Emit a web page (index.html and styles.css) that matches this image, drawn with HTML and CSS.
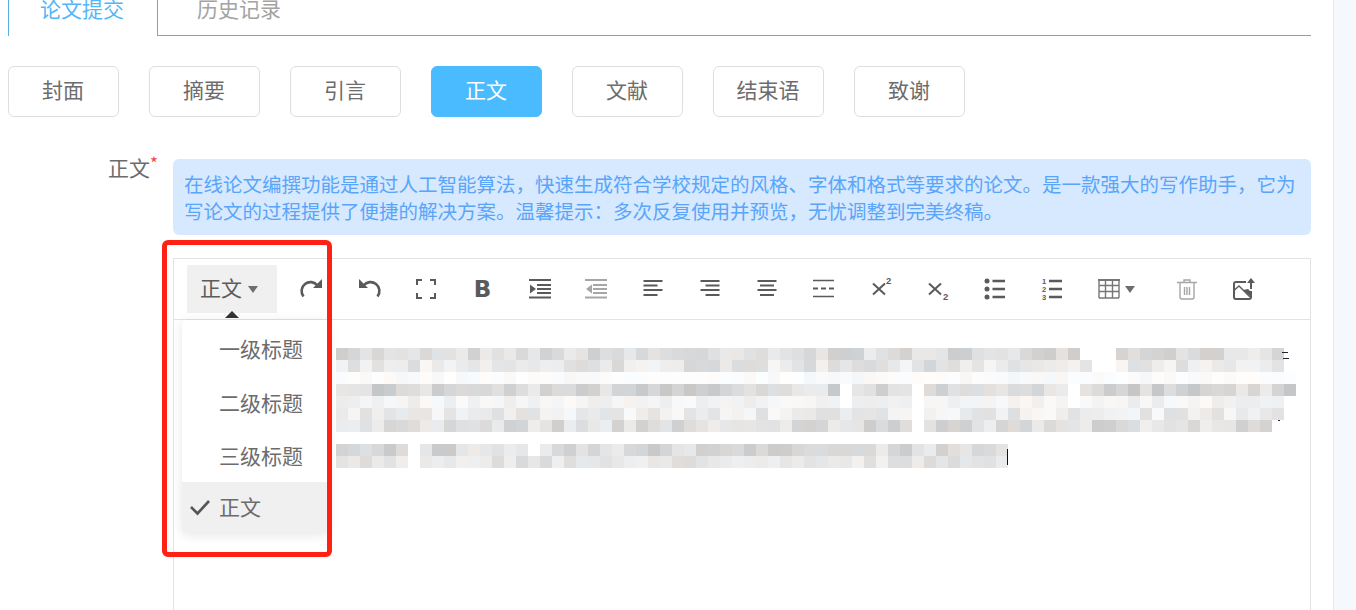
FILE: index.html
```html
<!DOCTYPE html>
<html lang="zh-CN">

<head>
  <meta charset="UTF-8">
  <meta name="viewport" content="width=device-width, initial-scale=1.0">
  <title>论文提交</title>
  <link rel="stylesheet" href="styles.css">
</head>

<body>
  <div class="page">
    <div class="main">
      <div class="tabs">
        <div class="tab active">论文提交</div>
        <div class="tab">历史记录</div>
      </div>

      <div class="sections">
        <button class="section">封面</button>
        <button class="section">摘要</button>
        <button class="section">引言</button>
        <button class="section active">正文</button>
        <button class="section">文献</button>
        <button class="section">结束语</button>
        <button class="section">致谢</button>
      </div>

      <div class="field">
        <label class="field-label">正文<span class="star">*</span></label>
        <div class="field-body">
          <div class="notice">在线论文编撰功能是通过人工智能算法，快速生成符合学校规定的风格、字体和格式等要求的论文。是一款强大的写作助手，它为写论文的过程提供了便捷的解决方案。温馨提示：多次反复使用并预览，无忧调整到完美终稿。</div>

          <div class="editor">
            <div class="toolbar">
              <div class="heading-btn">正文<span class="caret"></span></div>

              <div class="tool">
                <svg width="22" height="22" viewBox="0 0 22 22"><path class="line thick" d="M2.500 18.500A8.500 8.500 0 0 1 16.500 7.500"/><path class="fill" d="M21 1v9h-9z"/></svg>
              </div>
              <div class="tool">
                <svg width="22" height="22" viewBox="0 0 22 22"><path class="line thick" d="M19.500 18.500A8.500 8.500 0 0 0 5.500 7.500"/><path class="fill" d="M1 1v9h9z"/></svg>
              </div>
              <div class="tool">
                <svg width="22" height="22" viewBox="0 0 22 22"><path class="line" d="M2 7V2h5M15 2h5v5M20 15v5h-5M7 20H2v-5"/></svg>
              </div>
              <div class="tool bold">B</div>
              <div class="tool">
                <svg width="22" height="22" viewBox="0 0 22 22"><path class="line" d="M0 2h22M8 7h14M8 11h14M8 15h14M0 19.500h22"/><path class="fill" d="M1 6.500l6 4.500-6 4.500z"/></svg>
              </div>
              <div class="tool muted">
                <svg width="22" height="22" viewBox="0 0 22 22"><path class="line" d="M0 2h22M8 7h14M8 11h14M8 15h14M0 19.500h22"/><path class="fill" d="M7 6.500l-6 4.500 6 4.500z"/></svg>
              </div>
              <div class="tool">
                <svg width="22" height="22" viewBox="0 0 22 22"><path class="line" d="M1.500 3h19M1.500 7.500h14M1.500 12h19M1.500 17h14"/></svg>
              </div>
              <div class="tool">
                <svg width="22" height="22" viewBox="0 0 22 22"><path class="line" d="M1.500 3h19M6.500 7.500h14M1.500 12h19M6.500 17h14"/></svg>
              </div>
              <div class="tool">
                <svg width="22" height="22" viewBox="0 0 22 22"><path class="line" d="M1.500 3h19M4 7.500h14M1.500 12h19M4 17h14"/></svg>
              </div>
              <div class="tool">
                <svg width="22" height="22" viewBox="0 0 22 22"><path class="line thin" d="M0 2.500h21M0 18.500h21"/><path class="line" d="M0 10.500h5M8 10.500h5M16 10.500h5"/></svg>
              </div>
              <div class="tool">
                <svg width="22" height="22" viewBox="0 0 22 22"><path class="line" d="M3 5.500l12 11M15 5.500L3 16.500"/><text class="mini" x="16" y="6">2</text></svg>
              </div>
              <div class="tool">
                <svg width="22" height="22" viewBox="0 0 22 22"><path class="line" d="M2 5.500l12 11M14 5.500L2 16.500"/><text class="mini" x="16" y="21.500">2</text></svg>
              </div>
              <div class="tool">
                <svg width="22" height="22" viewBox="0 0 22 22"><circle class="fill" cx="3" cy="3" r="2.500"/><circle class="fill" cx="3" cy="11" r="2.500"/><circle class="fill" cx="3" cy="19" r="2.500"/><path class="line thick" d="M8.500 3H21M8.500 11H21M8.500 19H21"/></svg>
              </div>
              <div class="tool">
                <svg width="22" height="22" viewBox="0 0 22 22"><text class="mini tiny" x="1" y="6">1</text><text class="mini tiny" x="1" y="14">2</text><text class="mini tiny" x="1" y="22">3</text><path class="line thick" d="M8 3h13M8 11h13M8 19h13"/></svg>
              </div>
              <div class="tool tool-table">
                <svg width="22" height="22" viewBox="0 0 22 22"><path class="line thin" d="M1 7.500h20M1 13.500h20M7.500 2v18M14.500 2v18M1 20h20M1 2v18M21 2v18"/><path class="line" d="M0 2h22"/></svg>
                <span class="caret"></span>
              </div>
              <div class="tool muted">
                <svg width="22" height="22" viewBox="0 0 22 22"><path class="line thin" d="M1 4.500h20M4 5v14a2 2 0 0 0 2 2h10a2 2 0 0 0 2-2V5M8 4.500V2h6v2.500M8.500 9v8M11 9v8M13.500 9v8"/></svg>
              </div>
              <div class="tool">
                <svg width="22" height="22" viewBox="0 0 22 22"><path class="line" d="M13 4H3a2 2 0 0 0-2 2v13a2 2 0 0 0 2 2h13a2 2 0 0 0 2-2v-6"/><path class="line thin" d="M1.500 12l4.500-4 11 11"/><path class="line" d="M18 11V3"/><path class="fill" d="M18 0l4 5h-8z"/><path class="fill" d="M10 12l5-1 3 3v5z"/></svg>
              </div>
            </div>

            <div class="editor-body">
              <div class="mosaic" id="mosaic">
                <span class="speck speck-a"></span>
                <span class="speck speck-b"></span>
                <span class="speck speck-c"></span>
                <span class="text-cursor"></span>
              </div>
            </div>

            <div class="menu-arrow"></div>
            <ul class="menu">
              <li class="menu-item">一级标题</li>
              <li class="menu-item">二级标题</li>
              <li class="menu-item">三级标题</li>
              <li class="menu-item selected">
                <svg class="check" width="22" height="18" viewBox="0 0 22 18"><path d="M2 9l6.500 6.500L20 3"/></svg>
                正文
              </li>
            </ul>
          </div>
        </div>
      </div>

      <div class="callout"></div>
    </div>
    <div class="scrollbar"></div>
  </div>

  <script src="mosaic.js"></script>
</body>

</html>
```

FILE: styles.css
```css
:root {
  --blue: #58b0e6;
  --text: #6c6c6c;
  --icon: #5a5a5a;
  --line: #e3e3e3;
  --hover: #f0f0f0;
}

* {
  box-sizing: border-box;
}

html,
body {
  margin: 0;
  padding: 0;
  height: 100%;
  overflow: hidden;
  background-color: #fff;
}

body {
  font-family: "Noto Sans CJK SC", "Liberation Sans", sans-serif;
  font-size: 21px;
  color: var(--text);
}

.page {
  display: flex;
  height: 610px;
  overflow: hidden;
}

.main {
  position: relative;
  width: 1333px;
  padding: 0 22px 0 8px;
}

.scrollbar {
  width: 23px;
  background-color: #f5f8fc;
  border-left: 1px solid #e8e8e8;
}

/* tabs, cut off by the top of the window */
.tabs {
  display: flex;
  height: 52px;
  margin-top: -16px;
}

.tab {
  width: 149px;
  height: 52px;
  padding-top: 8px;
  line-height: 32px;
  border-left: 1px solid var(--blue);
}

.tab.active {
  padding-right: 2px;
  text-align: center;
  color: #55b6f5;
}

.tab:not(.active) {
  flex: 1;
  padding-left: 39px;
  color: #a3a3a3;
  border-bottom: 1px solid var(--blue);
}

.sections {
  display: flex;
  gap: 30px;
  margin-top: 30px;
}

.section {
  width: 111px;
  height: 51px;
  padding: 0 1px 6px 0;
  font: inherit;
  color: var(--text);
  background-color: #fff;
  border: 1px solid #dedede;
  border-radius: 6px;
}

.section.active {
  color: #fff;
  background-color: #4bbbff;
  border-color: #4bbbff;
}

.field {
  display: flex;
  margin-top: 42px;
}

.field-label {
  width: 165px;
  padding-right: 22px;
  text-align: right;
  line-height: 20px;
  margin-top: -2px;
}

.star {
  position: relative;
  top: -6px;
  font-size: 17px;
  color: #f5483b;
  margin-right: -7px;
}

.field-body {
  flex: 1;
  min-width: 0;
}

.notice {
  padding: 11px 8px 11px 11px;
  font-size: 19.5px;
  line-height: 27px;
  color: #5aa5fa;
  background-color: #d6e9fe;
  border-radius: 6px;
}

.editor {
  position: relative;
  margin-top: 23px;
  border: 1px solid var(--line);
}

.toolbar {
  display: flex;
  align-items: center;
  height: 61px;
  padding-left: 13px;
  border-bottom: 1px solid var(--line);
}

.heading-btn {
  display: flex;
  align-items: center;
  width: 90px;
  height: 48px;
  padding: 0 0 4px 13px;
  color: #5c5c5c;
  background-color: var(--hover);
}

.caret {
  width: 0;
  height: 0;
  margin: 4px 0 0 6px;
  border-top: 7px solid #6e6e6e;
  border-left: 5px solid transparent;
  border-right: 5px solid transparent;
}

.tool {
  display: flex;
  flex: none;
  align-items: center;
  justify-content: center;
  width: 56.9px;
  height: 48px;
  color: var(--icon);
}

.tool svg {
  overflow: visible;
}

.tool:nth-child(2) {
  margin-left: 6.5px;
}

.tool.muted {
  color: #a6a6a6;
}

.tool.bold {
  font-family: "DejaVu Sans", sans-serif;
  font-size: 23px;
  font-weight: 700;
}

.tool-table {
  justify-content: flex-start;
  width: 78.5px;
  padding-left: 18.5px;
  color: #777;
}

.tool-table svg {
  flex: none;
}

.tool-table .caret {
  margin: 0 0 0 5px;
}

.line {
  fill: none;
  stroke: currentColor;
  stroke-width: 2;
}

.line.thick {
  stroke-width: 2.6;
}

.line.thin {
  stroke-width: 1.4;
}

.fill {
  fill: currentColor;
}

.mini {
  font-family: "Liberation Sans", sans-serif;
  font-size: 9.5px;
  font-weight: 700;
  fill: currentColor;
}

.mini.tiny {
  font-size: 7.5px;
}

.editor-body {
  height: 340px;
  padding: 28px 0 0 162px;
}

.mosaic {
  position: relative;
  display: grid;
  grid-template-columns: repeat(80, 12px);
  grid-auto-rows: 12px;
}

.text-cursor {
  position: absolute;
  left: 671px;
  top: 101px;
  width: 1px;
  height: 16px;
  background-color: #111;
}

/* bits of real text that stick out of the blur */
.speck {
  position: absolute;
  width: 6px;
  height: 1px;
  background-color: #223;
}

.speck-a {
  left: 946px;
  top: 4px;
}

.speck-b {
  left: 947px;
  top: 10px;
}

.speck-c {
  left: 942px;
  top: 72px;
  width: 2px;
}

/* heading dropdown */
.menu-arrow {
  position: absolute;
  left: 51px;
  top: 52px;
  width: 0;
  height: 0;
  border-bottom: 7px solid #333;
  border-left: 7px solid transparent;
  border-right: 7px solid transparent;
}

.menu {
  position: absolute;
  left: 8px;
  top: 61px;
  width: 146px;
  margin: 0;
  padding: 3px 0 0;
  list-style: none;
  background-color: #fff;
  border-radius: 4px;
  box-shadow: 0 2px 12px rgba(0, 0, 0, 0.1);
}

.menu-item {
  position: relative;
  height: 53px;
  padding-left: 37px;
  line-height: 52px;
}

.menu-item:first-child {
  line-height: 50px;
}

.menu-item.selected {
  height: 51px;
  line-height: 49px;
  background-color: var(--hover);
  border-radius: 0 0 4px 4px;
}

.check {
  position: absolute;
  left: 7px;
  top: 16px;
}

.check path {
  fill: none;
  stroke: #555;
  stroke-width: 2.6;
}

/* red box drawn over the screenshot */
.callout {
  position: absolute;
  left: 162px;
  top: 240px;
  width: 170px;
  height: 317px;
  border: 5px solid #ff2214;
  border-radius: 6px;
}
```

FILE: mosaic.js
```js
// blurred editor text: rows of 12px cells with a fixed seed
var rows = [
  { end: 79, lo: 205, hi: 236, gaps: [62, 63, 64] },
  { end: 79, lo: 214, hi: 246, gaps: [63, 64] },
  { end: 80, lo: 247, hi: 254, gaps: [] },
  { end: 80, lo: 196, hi: 236, gaps: [42, 48, 61] },
  { end: 79, lo: 236, hi: 250, gaps: [42, 48, 61] },
  { end: 79, lo: 224, hi: 250, gaps: [48] },
  { end: 78, lo: 205, hi: 240, gaps: [48] },
  { end: 0, lo: 255, hi: 255, gaps: [] },
  { end: 56, lo: 200, hi: 236, gaps: [6, 16] },
  { end: 56, lo: 218, hi: 242, gaps: [6] }
];

var seed = 7;

function next() {
  seed = (seed * 16807) % 2147483647;
  return seed / 2147483647;
}

var mosaic = document.getElementById("mosaic");

rows.forEach(function (row) {
  for (var i = 0; i < 80; i++) {
    var cell = document.createElement("span");
    if (i < row.end && row.gaps.indexOf(i) === -1) {
      var v = Math.round(row.lo + next() * (row.hi - row.lo));
      var tint = Math.round(next() * 6) - 3;
      cell.style.backgroundColor = "rgb(" + (v + tint) + "," + v + "," + (v - tint) + ")";
    }
    mosaic.appendChild(cell);
  }
});
```
